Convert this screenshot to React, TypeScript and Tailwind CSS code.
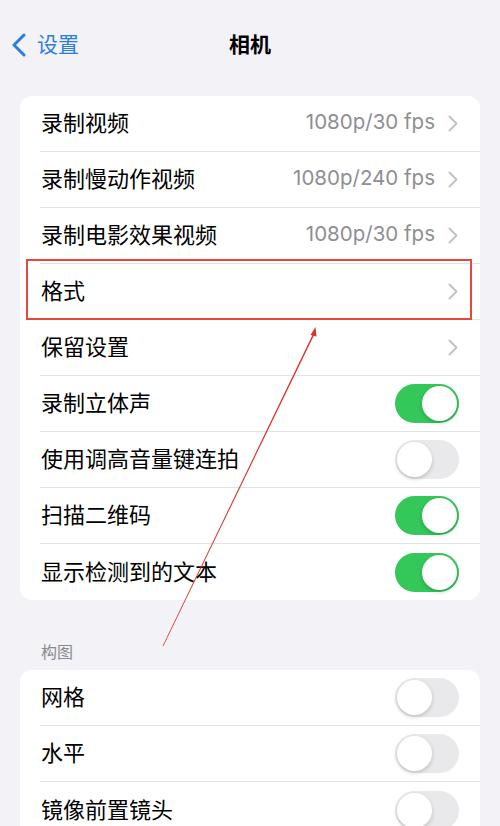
import React from "react";

type Row =
  | { label: string; kind: "link"; value?: string }
  | { label: string; kind: "toggle"; on: boolean };

const mainRows: Row[] = [
  { label: "录制视频", kind: "link", value: "1080p/30 fps" },
  { label: "录制慢动作视频", kind: "link", value: "1080p/240 fps" },
  { label: "录制电影效果视频", kind: "link", value: "1080p/30 fps" },
  { label: "格式", kind: "link" },
  { label: "保留设置", kind: "link" },
  { label: "录制立体声", kind: "toggle", on: true },
  { label: "使用调高音量键连拍", kind: "toggle", on: false },
  { label: "扫描二维码", kind: "toggle", on: true },
  { label: "显示检测到的文本", kind: "toggle", on: true },
];

const compositionRows: Row[] = [
  { label: "网格", kind: "toggle", on: false },
  { label: "水平", kind: "toggle", on: false },
  { label: "镜像前置镜头", kind: "toggle", on: false },
];

function Chevron() {
  return (
    <svg width="10" height="17" viewBox="0 0 10 17" className="ml-[13px]">
      <polyline
        points="1.5,1.5 8.5,8.5 1.5,15.5"
        fill="none"
        stroke="#c2c2c6"
        strokeWidth="2"
        strokeLinecap="round"
        strokeLinejoin="round"
      />
    </svg>
  );
}

function Toggle({ on }: { on: boolean }) {
  return (
    <div
      className={
        on
          ? "flex h-[39px] w-[64px] items-center justify-end rounded-full bg-[#34c759] px-[2px]"
          : "flex h-[39px] w-[64px] items-center justify-start rounded-full bg-[#e9e9eb] px-[2px]"
      }
    >
      <div className="h-[35px] w-[35px] rounded-full bg-white shadow-[0_2px_4px_rgba(0,0,0,0.18)]" />
    </div>
  );
}

function SettingsRow({ row, last }: { row: Row; last: boolean }) {
  return (
    <div className="flex h-[56px] pl-[20px]">
      <div
        className={
          last
            ? "flex flex-1 items-center pr-[21px]"
            : "flex flex-1 items-center border-b border-[#e3e3e6] pr-[21px]"
        }
      >
        <span className="mb-[4px] flex-1 pl-[1px] text-[22px] text-black">{row.label}</span>
        {row.kind === "link" ? (
          <div className="flex items-center pr-[1px]">
            {row.value && (
              <span className="mb-[2px] text-[20.5px] text-[#8e8e93] [font-family:Inter,'Noto_Sans_CJK_SC',sans-serif]">
                {row.value}
              </span>
            )}
            <Chevron />
          </div>
        ) : (
          <Toggle on={row.on} />
        )}
      </div>
    </div>
  );
}

function Card({ rows }: { rows: Row[] }) {
  return (
    <div className="mx-[20px] overflow-hidden rounded-[12px] bg-white">
      {rows.map((r, i) => (
        <SettingsRow key={r.label} row={r} last={i === rows.length - 1} />
      ))}
    </div>
  );
}

export default function App() {
  return (
    <div className="relative h-[826px] w-[500px] overflow-hidden bg-[#f2f2f7] [font-family:'Noto_Sans_CJK_SC','Noto_Sans',sans-serif]">
      <header className="relative flex h-[90px] items-center">
        <div className="flex items-center pl-[11px] text-[#2b7de0]">
          <svg width="16" height="24" viewBox="0 0 16 24">
            <polyline
              points="13,2 3,12 13,22"
              fill="none"
              stroke="#2b7de0"
              strokeWidth="3"
              strokeLinecap="round"
              strokeLinejoin="round"
            />
          </svg>
          <span className="mb-[2px] ml-[10px] text-[21px]">设置</span>
        </div>
        <h1 className="absolute left-0 right-0 mb-[2px] text-center text-[21px] font-semibold text-black">相机</h1>
      </header>

      <div className="mt-[6px]">
        <Card rows={mainRows} />
      </div>

      <div className="px-[41px] pb-[8px] pt-[40px] text-[16px] leading-[22px] text-[#8a8a8e]">构图</div>
      <Card rows={compositionRows} />

      {/* annotation */}
      <div className="pointer-events-none absolute left-[26px] top-[259px] h-[61px] w-[446px] border-2 border-[#e5483c]" />
      <svg className="pointer-events-none absolute left-0 top-0" width="500" height="826" viewBox="0 0 500 826">
        <polygon points="162.6,646 163.4,646 314.6,334 313.2,333.4" fill="#d8332a" />
        <polygon points="315.5,327 310.5,335 316.5,336.6" fill="#d8332a" />
      </svg>
    </div>
  );
}
